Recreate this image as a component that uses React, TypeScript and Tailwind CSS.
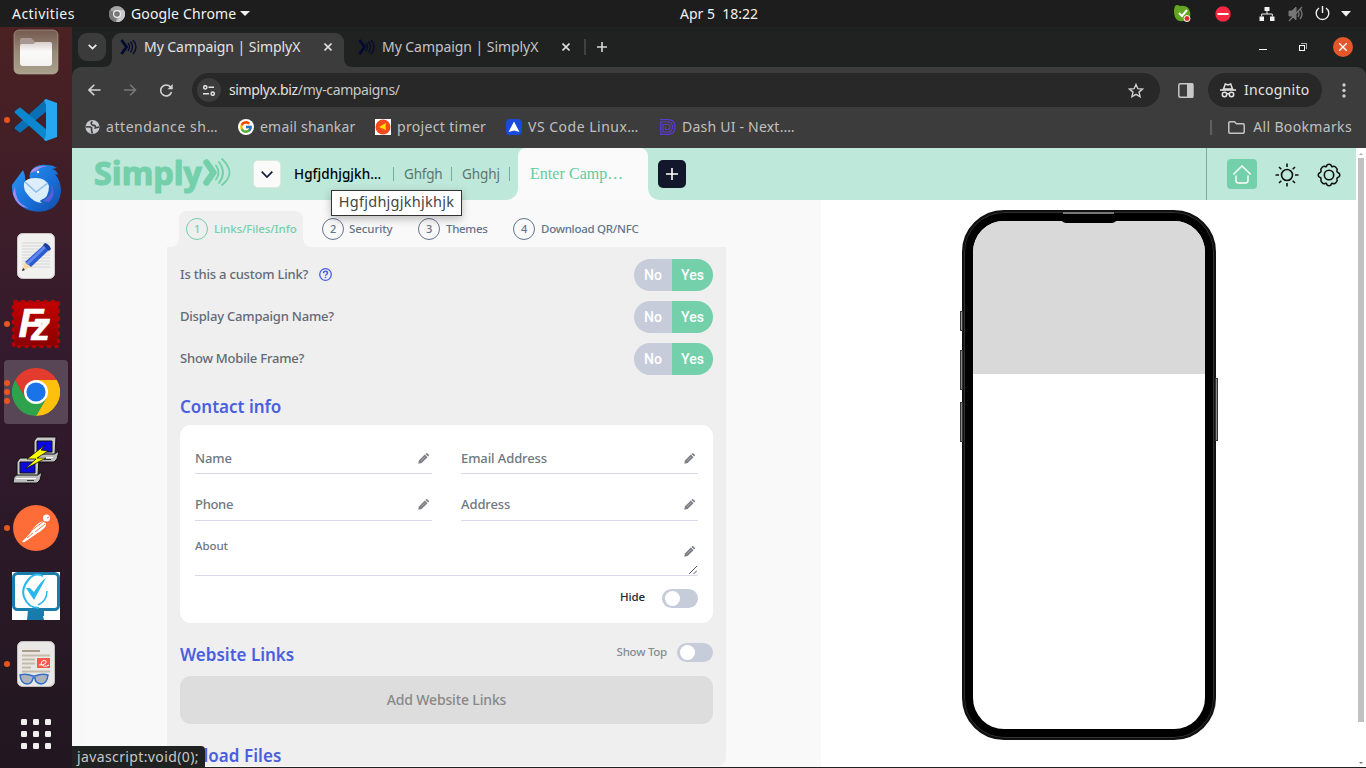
import React from "react";
import { FcGoogle } from "react-icons/fc";

const ui = "font-['Noto_Sans',sans-serif]";

/* ---------- Top bar ---------- */

function TopBar() {
  return (
    <div className="relative flex h-[27px] shrink-0 items-center bg-[#1d1d1d] text-[14px] text-[#f2f2f2]">
      <span className="w-[109px] pl-[12px] text-[14px] tracking-[0.45px]">Activities</span>
      <svg width="16" height="16" viewBox="0 0 16 16">
        <circle cx="8" cy="8" r="8" fill="#a5a5a5" />
        <path d="M8 8 1 4a8 8 0 0 0 6 12z" fill="#787878" />
        <path d="M8 4h7a8 8 0 0 1-8 12l4-6z" fill="#c9c9c9" />
        <circle cx="8" cy="8" r="4" fill="#eee" />
        <circle cx="8" cy="8" r="2.8" fill="#777" />
      </svg>
      <span className="ml-[6px] w-[104px] whitespace-nowrap text-[14px] tracking-[0.15px]">Google Chrome</span>
      <svg className="ml-[5px]" width="10" height="5" viewBox="0 0 10 5"><path d="M0 0h10L5 5z" fill="#f2f2f2" /></svg>
      <span className="ml-[430px] w-[80px] whitespace-pre text-[14px] tracking-[0px]">Apr 5  18:22</span>
      <svg className="ml-[414px]" width="17" height="17" viewBox="0 0 17 17">
        <path d="M1 1q2-2 5 0 6-1 9 3 2 4 1 8-2 5-7 4-6 1-8-4Q-1 6 1 1z" fill="#61a521" />
        <path d="m5 8 3 3 5-6" stroke="#fff" strokeWidth="2" fill="none" />
        <circle cx="13" cy="13.5" r="3" fill="#e03030" stroke="#fff" />
      </svg>
      <svg className="ml-[24px]" width="16" height="16" viewBox="0 0 16 16">
        <circle cx="8" cy="8" r="7.7" fill="#f42941" /><path d="M2.500 7h11v2h-11z" fill="#fff" />
      </svg>
      <svg className="ml-[28px]" width="16" height="14" viewBox="0 0 16 14" fill="#f2f2f2">
        <path d="M5.500 0h5v4h-5zM.5 9.500h4.500V14H.5zM11 9.500h4.500V14H11z" />
        <path d="M8 4v3M2.700 9.500V7h10.600v2.500" stroke="#f2f2f2" fill="none" />
      </svg>
      <svg className="ml-[13px]" width="16" height="16" viewBox="0 0 16 16" fill="none" stroke="#777">
        <path d="M1 5h3l4-4v13l-4-4H1z" fill="#777" /><path d="M10 5q2 3 0 6M12 3q4 5 0 10M1 15 14 1" strokeWidth="1.300" />
      </svg>
      <svg className="ml-[11px]" width="15" height="15" viewBox="0 0 15 15" fill="none" stroke="#f2f2f2" strokeWidth="1.400">
        <path d="M4 2a6.300 6.300 0 1 0 7 0M7.500 0v7" />
      </svg>
      <svg className="ml-[11px]" width="10" height="6" viewBox="0 0 10 6"><path d="M0 0h10L5 5.500z" fill="#f2f2f2" /></svg>
    </div>
  );
}

/* ---------- Dock ---------- */

function FilesIcon() {
  return (
    <svg width="46" height="46" viewBox="0 0 46 46">
      <defs>
        <linearGradient id="fg" x1="0" y1="0" x2="0" y2="1"><stop offset="0" stopColor="#75594f" /><stop offset=".5" stopColor="#978a77" /><stop offset="1" stopColor="#a9a08b" /></linearGradient>
        <linearGradient id="ff" x1="0" y1="0" x2="0" y2="1"><stop offset="0" stopColor="#d9cfcc" /><stop offset=".4" stopColor="#fbfafa" /><stop offset="1" stopColor="#f4f2f1" /></linearGradient>
      </defs>
      <rect x="1" y="1" width="44" height="44" rx="5" fill="url(#fg)" stroke="#b7ae9c" strokeOpacity=".6" />
      <path d="M7 11q0-2 2-2h9l4 4h15q2 0 2 2v8H7z" fill="#a99793" />
      <path d="M7 17q0-2 2-2h11l3-2h14q2 0 2 2v19q0 3-3 3H10q-3 0-3-3z" fill="url(#ff)" />
    </svg>
  );
}

function VsCodeIcon() {
  return (
    <svg width="44" height="44" viewBox="0 0 44 44">
      <path d="M32 1 1 29q-1 1 0 2l4 3q1 1 2 0L33 13z" fill="#0870b4" />
      <path d="M32 43 1 15q-1-1 0-2l4-3q1-1 2 0l26 22z" fill="#0a87cf" />
      <path d="m32 1 11 4v34l-11 4-2-1 2-5V7l-2-5z" fill="#27a7f0" />
    </svg>
  );
}

function ThunderbirdIcon() {
  return (
    <svg width="50" height="48" viewBox="0 0 50 48">
      <defs><linearGradient id="tb" x1="0" y1="0" x2="1" y2="1"><stop offset="0" stopColor="#2a9af5" /><stop offset=".6" stopColor="#176cd6" /><stop offset="1" stopColor="#124ba5" /></linearGradient></defs>
      <path d="M1 21Q6 14 12 6q3 6 2 11l5-1q-2-8 5-13 5-3 12-2 6 0 10 3l-5 1q5 1 6 6l-3-1q6 7 6 17-1 13-10 18-10 5-23 1Q0 39 1 21z" fill="url(#tb)" />
      <path d="M19 9q3-8 17-7-7 1-11 5zM4 22q0 16 13 22Q6 43 2 30z" fill="#a98bf0" />
      <path d="M6 24q-2 14 12 19Q3 40 6 24z" fill="#1d7ee8" />
      <path d="M40 19q3 11-8 18l6 1q8-7 2-19z" fill="#5a5fd5" />
      <circle cx="27" cy="8" r="1.200" fill="#fff" />
      <path d="M13 19q2-5 12-5t13 8q0 12-8 14-2 1 1 3-9-1-14-8-5-5-4-12z" fill="#dcedfb" />
      <path d="m14 18 11 10 12-9" fill="none" stroke="#8bbbe8" strokeWidth="1.500" />
    </svg>
  );
}

function EditorIcon() {
  return (
    <svg width="38" height="46" viewBox="0 0 38 46">
      <rect x=".5" y=".5" width="37" height="45" rx="5" fill="#f1f1f0" stroke="#c9c7c5" />
      <path d="M5 10h28M5 13h28M5 16h28M5 19h28M5 22h28M5 25h28M5 28h28M5 31h28M5 34h28" stroke="#cfcfcf" strokeWidth=".8" />
      <path d="m5 38 3-9 6 5z" fill="#f7d9a8" /><path d="m5 38 1-3 2 2z" fill="#222" />
      <path d="m8 29 20-18 5 5-19 18z" fill="#2c5bd0" /><path d="m9 30 19-18 2 2-19 18z" fill="#6089ef" />
      <path d="m26 12 2-2q4 1 6 6l-2 2z" fill="#1d3f9e" />
    </svg>
  );
}

function FileZillaIcon() {
  return (
    <svg width="48" height="48" viewBox="0 0 48 48">
      <defs><linearGradient id="fz" x1="0" y1="0" x2="0" y2="1"><stop offset="0" stopColor="#c50000" /><stop offset="1" stopColor="#8a0000" /></linearGradient></defs>
      <rect x="1.500" y="1.500" width="45" height="45" fill="url(#fz)" />
      <rect x="1.500" y="1.500" width="45" height="45" fill="none" stroke="#b00404" strokeWidth="3" strokeDasharray="4 3.500" />
      <g fontFamily="Liberation Sans, sans-serif" fontWeight="700" fontStyle="italic" fill="#fff" stroke="#fff" strokeWidth=".6">
        <text x="6.500" y="37" fontSize="41" textLength="25" lengthAdjust="spacingAndGlyphs">F</text>
        <text x="19" y="40" fontSize="39" textLength="19" lengthAdjust="spacingAndGlyphs">z</text>
      </g>
    </svg>
  );
}

function ChromeIcon() {
  return (
    <svg width="48" height="48" viewBox="0 0 48 48">
      <path d="M24 12h20.800A24 24 0 0 1 24 48l10.400-18z" fill="#fdc10d" />
      <path d="M3.200 12A24 24 0 0 0 24 48l10.400-18-20.800 0z" fill="#2fa24c" />
      <path d="M24 12h20.800A24 24 0 0 0 3.200 12l10.400 18z" fill="#e33b2e" />
      <circle cx="24" cy="24" r="12" fill="#fff" /><circle cx="24" cy="24" r="9.600" fill="#1a73e8" />
    </svg>
  );
}

function PuttyIcon() {
  const pc = (
    <g stroke="#111" strokeWidth="1">
      <path d="m1 19 4-3h21l3-2-2 8-3 3H0z" fill="#bdbdbd" />
      <path d="M4 4 7 0h19l-1 17H4z" fill="#c9c9c9" />
      <path d="M7 4h15v11H7z" fill="#0a0ae0" />
      <path d="M3 20.500h20" stroke="#fff" /><path d="M14 22.500h7" stroke="#333" />
    </g>
  );
  return (
    <svg width="48" height="48" viewBox="0 0 48 48">
      <g transform="translate(18 1)">{pc}</g><g transform="translate(1 22)">{pc}</g>
      <path d="m33 9-18 14h9l-11 10 21-11h-9l11-7-7-1z" fill="#ff0" stroke="#111" strokeWidth=".8" />
    </svg>
  );
}

function PostmanIcon() {
  return (
    <svg width="46" height="46" viewBox="0 0 46 46">
      <circle cx="23" cy="23" r="23" fill="#fe6c37" />
      <path d="M9 36.500q8-7 11-13 7-8 10-7l3 2q1 4-9 10L11 37.500z" fill="#fff" />
      <path d="m19 25 12-9m-9 11 10-8M14 33l6-5" stroke="#fe6c37" strokeWidth=".9" />
      <circle cx="33.500" cy="13" r="3.500" fill="#fff" /><path d="m34 13 2-1" stroke="#fe6c37" />
    </svg>
  );
}

function TickIcon() {
  return (
    <svg width="48" height="48" viewBox="0 0 48 48">
      <path d="M0 0h48v48H0z" fill="#fff" />
      <rect x="1.500" y="1.500" width="45" height="36" rx="4" fill="none" stroke="#187cad" strokeWidth="3" />
      <path d="M16 38h16v6h-1l1 4H15z" fill="#187cad" />
      <path d="M31 4Q23 0 17 7q-8 9-5 18 4 11 15 11" fill="none" stroke="#2bb6ee" strokeWidth="2" />
      <path d="m14 16 8 12L34 6q-5 3-12 14l-4-4z" fill="#2bb6ee" />
      <path d="M35 19q0 10-9 14" fill="none" stroke="#2bb6ee" strokeWidth="1.500" />
    </svg>
  );
}

function DocIcon() {
  return (
    <svg width="38" height="46" viewBox="0 0 38 46">
      <rect x=".5" y=".5" width="37" height="45" rx="5" fill="#e9e8e7" stroke="#bfbcba" />
      <path d="M5 10h18" stroke="#aa9d88" strokeWidth="2" />
      <path d="M5 14.500h28M5 18.500h13M5 22.500h13M5 26.500h9M5 30.500h28" stroke="#c5bba9" strokeWidth="1.800" />
      <path d="M20 17h13v10H20z" fill="#f45a4c" /><path d="M22 24q8 0 7-4-4-2-5 3 3 4 8 1" fill="none" stroke="#fff" />
      <path d="M3 34q6-2 13 1h2q7-3 13-1-1 9-7 9-6-1-6-6h-2q-1 6-6 6-6 0-7-9z" fill="#aeb3bb" stroke="#2f6fc4" strokeWidth="1.500" />
    </svg>
  );
}

function GridIcon() {
  return (
    <svg className="mt-[4px]" width="30" height="30" viewBox="0 0 30 30" fill="#f0eeee">
      {[0, 12, 24].map((y) => [0, 12, 24].map((x) => <rect key={`${x}-${y}`} x={x} y={y} width="6" height="6" rx="1.200" />))}
    </svg>
  );
}

function Dock() {
  const items: [React.ReactNode, number][] = [
    [<FilesIcon />, 0], [<VsCodeIcon />, 1], [<ThunderbirdIcon />, 0], [<EditorIcon />, 0], [<FileZillaIcon />, 1],
    [<ChromeIcon />, 3], [<PuttyIcon />, 0], [<PostmanIcon />, 1], [<TickIcon />, 0], [<DocIcon />, 1], [<GridIcon />, 0],
  ];
  return (
    <div className="w-[72px] shrink-0 overflow-hidden bg-linear-to-b from-[#4b2122] via-[#331a2d] via-45% to-[#211720]">
      <div className="-mt-[9px] flex flex-col">
        {items.map(([icon, dots], i) => (
          <div key={i} className="flex h-[68px] shrink-0 items-center justify-center px-[4px]">
            <div className={dots === 3 ? "relative flex size-[64px] items-center justify-center rounded-[4px] bg-[#584657]" : "relative flex size-[64px] items-center justify-center"}>
              {icon}
              {dots > 0 && (
                <div className="absolute left-0 top-0 flex h-full flex-col items-center justify-center gap-[3px]">
                  {Array.from({ length: dots }).map((_, k) => <div key={k} className="size-[6px] rounded-full bg-[#e9541f]" />)}
                </div>
              )}
            </div>
          </div>
        ))}
      </div>
    </div>
  );
}

/* ---------- Browser chrome ---------- */

function Favicon() {
  return (
    <svg width="17" height="16" viewBox="0 0 17 16" fill="none" stroke="#050b2e">
      <path d="m1.500 1 5 7-5 7" strokeWidth="3" />
      <path d="M8 4q3 4 0 8M10.500 2.500q4 5.500 0 11M13 1q6 7 0 14" strokeWidth="1.300" />
    </svg>
  );
}

function Cross() {
  return <svg width="8" height="8" viewBox="0 0 8 8" stroke="#dcdcdc" strokeWidth="1.600"><path d="m.5.5 7 7m0-7-7 7" /></svg>;
}

function TabStrip() {
  return (
    <div className="flex h-[40px] shrink-0 bg-[#202222] pl-[6px] text-[14px]">
      <div className="mt-[6px] flex size-[28px] items-center justify-center rounded-[9px] bg-[#3b3b3b]">
        <svg width="9" height="6" viewBox="0 0 9 6" fill="none" stroke="#ececec" strokeWidth="1.700"><path d="m.7.8 3.800 3.800L8.300.8" /></svg>
      </div>
      <div className="relative ml-[6px] mt-[6px] flex h-[34px] w-[232px] items-start rounded-t-[9px] bg-[#3c3c3c] pl-[8px] text-[#e3e3e3]">
        <svg className="absolute -left-[9px] bottom-0" width="9" height="9" viewBox="0 0 9 9"><path d="M9 0v9H0q9 0 9-9z" fill="#3c3c3c" /></svg>
        <svg className="absolute -right-[9px] bottom-0" width="9" height="9" viewBox="0 0 9 9"><path d="M0 0v9h9q-9 0-9-9z" fill="#3c3c3c" /></svg>
        <div className="flex h-[28px] items-center"><Favicon />
          <span className="mb-[2px] ml-[7px] w-[180px] whitespace-nowrap text-[14px] tracking-[-0.06px]">My Campaign | SimplyX</span><Cross /></div>
      </div>
      <div className="mt-[6px] flex h-[28px] items-center pl-[14px] text-[#c4c4c4]">
        <Favicon />
        <span className="mb-[2px] ml-[7px] w-[180px] whitespace-nowrap text-[14px] tracking-[-0.06px]">My Campaign | SimplyX</span>
        <Cross />
        <div className="ml-[14px] h-[16px] w-[2px] bg-[#3f4040]" />
        <svg className="ml-[11px]" width="10" height="10" viewBox="0 0 10 10" stroke="#d8d8d8" strokeWidth="1.600"><path d="M5 0v10M0 5h10" /></svg>
      </div>
      <div className="ml-auto flex items-center pr-[13px]">
        <div className="mt-[5px] h-px w-[8px] bg-white" />
        <svg className="ml-[32px]" width="8" height="8" viewBox="0 0 8 8" fill="none" shapeRendering="crispEdges"><path d="M.5 2.500h5v5h-5z" stroke="#fff" /><path d="M2 .5h5.500V6" stroke="#aaa" /></svg>
        <div className="ml-[26px] flex size-[20px] items-center justify-center rounded-full bg-[#e5562a]">
          <svg width="8" height="8" viewBox="0 0 8 8" stroke="#fff" strokeWidth="1.400"><path d="m0 0 8 8m0-8-8 8" /></svg>
        </div>
      </div>
    </div>
  );
}

function Toolbar() {
  return (
    <div className="flex h-[46px] shrink-0 items-center rounded-t-[9px] bg-[#3c3c3c]">
      <svg className="ml-[16px]" width="13" height="12" viewBox="0 0 13 12" fill="none" stroke="#d2d2d2" strokeWidth="1.600"><path d="M12.500 6H1.200M6.300.7 1 6l5.300 5.300" /></svg>
      <svg className="ml-[23px]" width="13" height="12" viewBox="0 0 13 12" fill="none" stroke="#787878" strokeWidth="1.600"><path d="M0 6h11.300M6.200.7 11.500 6l-5.300 5.300" /></svg>
      <svg className="ml-[23px]" width="13" height="13" viewBox="0 0 13 13"><path d="M11.500 8A5.500 5.500 0 1 1 10.500 3L12 4.600" fill="none" stroke="#d2d2d2" strokeWidth="1.600" /><path d="M12.700 0v5.300H7.500z" fill="#d2d2d2" /></svg>
      <div className="ml-[19px] flex h-[34px] w-[968px] items-center rounded-full bg-[#282828] px-[5px] text-[14px]">
        <div className="flex size-[24px] items-center justify-center rounded-full bg-[#3c3c3c]">
          <svg width="12" height="11" viewBox="0 0 12 11" fill="none" stroke="#e3e3e3" strokeWidth="1.500"><circle cx="2.300" cy="2.300" r="1.600" /><path d="M5.500 2.300H11M0 8.700h6" /><circle cx="9.700" cy="8.700" r="1.600" /></svg>
        </div>
        <span className="mb-[2px] ml-[8px] tracking-[-0.36px] text-[#e3e3e3]">simplyx.biz<span className="text-[#c7c7c7]">/my-campaigns/</span></span>
        <svg className="ml-auto mr-[11px]" width="16" height="15" viewBox="0 0 16 15" fill="none" stroke="#d0d0d0" strokeWidth="1.400"><path d="m8 1.500 1.900 4.200 4.600.4-3.500 3 1.100 4.600L8 11.300l-4.100 2.400L5 9.100l-3.500-3 4.600-.4z" /></svg>
      </div>
      <svg className="ml-[18px]" width="16" height="15" viewBox="0 0 16 15"><rect x=".8" y=".8" width="13.900" height="13.400" rx="1.500" fill="none" stroke="#c7c7c7" strokeWidth="1.500" /><path d="M9 0h5q1.500 0 1.500 1.500v12Q15.500 15 14 15H9z" fill="#c7c7c7" /></svg>
      <div className="ml-[14px] flex h-[34px] w-[114px] items-center rounded-full bg-[#282828] pl-[12px] text-[14px] text-[#e3e3e3]">
        <svg width="16" height="15" viewBox="0 0 16 15"><path d="M0 7h16" fill="none" stroke="#e3e3e3" strokeWidth="1.600" /><path d="M3.500 6 5.300 1 8 2l2.700-1 1.800 5z" fill="none" stroke="#e3e3e3" strokeWidth="1.500" /><g fill="none" stroke="#e3e3e3" strokeWidth="1.500"><circle cx="4.500" cy="11.500" r="2.200" /><circle cx="11.500" cy="11.500" r="2.200" /><path d="M6.700 11q1.300-.8 2.600 0" /></g></svg>
        <span className="mb-[1px] ml-[8px] text-[14px] tracking-[0.28px]">Incognito</span>
      </div>
      <svg className="ml-[20px]" width="4" height="15" viewBox="0 0 4 15" fill="#cdcdcd"><circle cx="2" cy="2" r="1.700" /><circle cx="2" cy="7.500" r="1.700" /><circle cx="2" cy="13" r="1.700" /></svg>
    </div>
  );
}

function Bookmarks() {
  return (
    <div className="flex h-[35px] shrink-0 bg-[#3c3c3c] pl-[13px] text-[14px] text-[#c0c0c0]">
      <div className="flex h-[28px] items-center whitespace-nowrap">
        <svg width="15" height="16" viewBox="0 0 16 16"><circle cx="8" cy="8" r="7.500" fill="#c4c7cc" /><path d="M1 8q4-1 6 1v3l1 3M8 2q-3 2 0 4 4 0 3 3l4-1" fill="none" stroke="#3c3c3c" strokeWidth="1.700" /></svg>
        <span className="mb-[2px] ml-[6px] w-[132px] tracking-[0.56px]">attendance sh…</span>
        <span className="flex size-[16px] items-center justify-center rounded-full bg-white"><FcGoogle size={14} /></span>
        <span className="mb-[2px] ml-[6px] w-[115px] tracking-[0.22px]">email shankar</span>
        <svg width="16" height="16" viewBox="0 0 16 16"><path d="M0 0h16v16H0z" fill="#fff" /><circle cx="8" cy="8" r="7.500" fill="#f3491d" /><path d="m4 8 7-4-.5 3.500L11 11z" fill="#ffe500" /></svg>
        <span className="mb-[2px] ml-[6px] w-[109px] tracking-[0.33px]">project timer</span>
        <svg width="16" height="16" viewBox="0 0 16 16"><rect width="16" height="16" rx="4" fill="#194bdb" /><path d="M8 2.500 13.500 13 8 11.500 2.500 13z" fill="#fff" /></svg>
        <span className="mb-[2px] ml-[6px] w-[132px] tracking-[0.5px]">VS Code Linux…</span>
        <svg width="16" height="16" viewBox="0 0 16 16" fill="none" stroke="#5b3ccc" strokeWidth="1.200"><path d="M0 .7h8q7 0 7 7.300t-7 7.300H.7V3M0 3h8q4.500 0 4.500 5T8 13H3V5.500h5q2 0 2 2.500t-2 2.500H5.500V7.500" /></svg>
        <span className="mb-[2px] ml-[6px] tracking-[0.22px]">Dash UI - Next.…</span>
      </div>
      <div className="ml-auto flex h-[28px] items-center whitespace-nowrap pr-[14px]">
        <div className="h-[15px] w-[2px] bg-[#606060]" />
        <svg className="ml-[16px] mr-[8px]" width="17" height="13" viewBox="0 0 17 13" fill="none" stroke="#c4c4c4" strokeWidth="1.500"><path d="M.8 11V2Q.8.8 2 .8h4.500l2 2H15q1.200 0 1.200 1.200v7q0 1.200-1.200 1.200H2Q.8 12.200.8 11z" /></svg>
        <span className="mb-[2px] tracking-[0.35px]">All Bookmarks</span>
      </div>
    </div>
  );
}

/* ---------- Page ---------- */

function Logo() {
  return (
    <svg className="overflow-visible" width="140" height="50" viewBox="93 149 140 50">
      <text x="94" y="184.500" textLength="108" lengthAdjust="spacingAndGlyphs" fontSize="32.500" fontWeight="700" fontFamily="Open Sans, sans-serif" fill="#74d0ab" stroke="#74d0ab" strokeWidth="1.200" strokeLinejoin="round">Simply</text>
      <g fill="none" stroke="#74d0ab" strokeLinecap="round">
        <path d="m206.500 162.500 7 10-7 10" strokeWidth="6.500" strokeLinejoin="round" />
        <path d="M216 165.500q5 7 0 14M219 162q8 10.500 0 21M222 159q15 14 0 26" strokeWidth="1.800" />
      </g>
    </svg>
  );
}

function Header() {
  return (
    <div className="flex h-[52px] shrink-0 bg-[#fafafa]">
      <div className="flex w-[446px] items-center rounded-br-[12px] bg-[#bee8da] pl-[21px] text-[13.5px] text-[#5d746f]">
        <Logo />
        <div className="ml-[20px] flex size-[28px] items-center justify-center rounded-[5px] border border-[#dfe8df] bg-[#fafafa]">
          <svg width="12" height="7" viewBox="0 0 12 7" fill="none" stroke="#101936" strokeWidth="1.700"><path d="m.7.700 5.300 5.300L11.300.7" /></svg>
        </div>
        <span className="ml-[13px] w-[99px] whitespace-nowrap text-[13.5px] font-medium tracking-[0.07px] text-black">Hgfjdhjgjkh…</span>
        <div className="h-[14px] w-px bg-[#72af9c]" />
        <span className="ml-[10px] w-[47px] tracking-[-0.2px]">Ghfgh</span>
        <div className="h-[14px] w-px bg-[#72af9c]" />
        <span className="ml-[10px] w-[47px] tracking-[-0.1px]">Ghghj</span>
        <div className="h-[14px] w-px bg-[#72af9c]" />
      </div>
      <div className="w-[130px] bg-[linear-gradient(#bee8da_50%,#fafafa_50%)]">
        <div className="flex h-full items-center rounded-t-[8px] bg-[#fafafa] pl-[12px] font-['Liberation_Serif',serif] text-[16px] tracking-[0.05px] text-[#61cc9e]">Enter Camp…</div>
      </div>
      <div className="flex flex-1 items-center rounded-bl-[12px] bg-[#bee8da] pl-[10px]">
        <div className="flex size-[28px] items-center justify-center rounded-[5px] bg-[#12172b]">
          <svg width="12" height="12" viewBox="0 0 12 12" stroke="#fff" strokeWidth="1.600"><path d="M6 0v12M0 6h12" /></svg>
        </div>
        <div className="ml-auto flex h-full items-center border-l border-[#72af9c] pl-[20px] pr-[15px]">
          <div className="flex size-[30px] items-center justify-center rounded-[4px] bg-[#74d0ab]">
            <svg width="18" height="19" viewBox="0 0 18 19" fill="none" stroke="#fff" strokeWidth="1.400" strokeLinecap="round"><path d="m.8 9 8.200-8 8.200 8M3 11v4.500Q3 18 5.500 18h7q2.500 0 2.500-2.500V11" /></svg>
          </div>
          <svg className="ml-[18px] mt-[2px]" width="24" height="24" viewBox="0 0 24 24" fill="none" stroke="#111" strokeWidth="1.600"><circle cx="12" cy="12" r="5.500" /><path d="M12 .5V4M12 20v3.500M.5 12H4M20 12h3.500M4 4l2.300 2.300M17.700 17.700 20 20M4 20l2.300-2.300M17.700 6.300 20 4" /></svg>
          <svg className="ml-[18px] mt-[2px]" width="24" height="24" viewBox="0 0 24 24" fill="none" stroke="#111" strokeWidth="1.600" strokeLinejoin="round">
            <circle cx="12" cy="12" r="4.700" />
            <path d="M9.600 3Q10 1.200 12 1.200T14.400 3q.3 1 1.500.5Q17.500 2.700 19 4.500q1.800 1.500 1 3.300-.4 1 .8 1.600 2 .6 2 2.600t-2 2.600q-1.200.5-.8 1.600.8 1.800-1 3.300-1.500 1.800-3.100 1-1.200-.5-1.500.5-.4 1.800-2.400 1.800T9.600 21q-.3-1-1.500-.5-1.600.8-3.100-1-1.800-1.500-1-3.300.4-1.100-.8-1.600-2-.6-2-2.600t2-2.600Q4.400 8.800 4 7.800q-.8-1.800 1-3.300 1.500-1.800 3.100-1 1.200.5 1.500-.5z" />
          </svg>
        </div>
      </div>
    </div>
  );
}

function Steps() {
  const circle = "flex size-[22px] shrink-0 items-center justify-center rounded-full border border-current text-[11px]";
  return (
    <div className="flex h-[36px] items-center pl-[12px] text-[11.5px] font-medium tracking-[-0.1px] text-[#64748b]">
      <div className="relative flex h-full w-[124px] items-center whitespace-nowrap rounded-t-[8px] bg-[#efefef] pl-[7px] text-[#74d0ab]">
        <svg className="absolute -left-[8px] bottom-0" width="8" height="8" viewBox="0 0 8 8"><path d="M8 0v8H0q7-1 8-8z" fill="#efefef" /></svg>
        <svg className="absolute -right-[8px] bottom-0" width="8" height="8" viewBox="0 0 8 8"><path d="M0 0v8h8q-7-1-8-8z" fill="#efefef" /></svg>
        <span className={circle}>1</span><span className="ml-[6px]">Links/Files/Info</span>
      </div>
      <span className={`${circle} ml-[19px]`}>2</span><span className="ml-[5px] w-[69px]">Security</span>
      <span className={circle}>3</span><span className="ml-[6px] w-[67px] tracking-[-0.3px]">Themes</span>
      <span className={circle}>4</span><span className="ml-[6px] tracking-[-0.27px]">Download QR/NFC</span>
    </div>
  );
}

function YesNo() {
  return (
    <div className="flex h-[32px] w-[79px] overflow-hidden rounded-full font-['Roboto',sans-serif] text-[14px] font-medium tracking-normal text-white">
      <div className="flex w-[38px] items-center justify-center bg-[#c7ccda]">No</div>
      <div className="flex w-[41px] items-center justify-center bg-[#74d0ab]">Yes</div>
    </div>
  );
}

function Switch() {
  return <div className="flex h-[19px] w-[36px] items-center rounded-full bg-[#c7ccda] pl-[3px]"><div className="size-[15px] rounded-full bg-white" /></div>;
}

function Pencil({ className }: { className: string }) {
  return (
    <svg className={className} width="11" height="11" viewBox="0 0 11 11">
      <path d="M.3 10.700.9 7.400 6.800 1.500l2.700 2.700-5.900 5.900z" fill="#7d7e87" />
      <path d="m7.400.9.500-.5q.7-.7 1.500 0l1.200 1.200q.7.800 0 1.500l-.5.500z" fill="#7d7e87" />
      <path d="m3 7.800 4-4" stroke="#c5c5cb" strokeWidth=".6" />
    </svg>
  );
}

function Field({ label, className }: { label: string; className: string }) {
  return (
    <div className={`flex items-start justify-between border-b border-[#d9d8ec] pr-[3px] ${className}`}>
      <span className="text-[13px] leading-[18px]">{label}</span>
      <Pencil className="mt-[4px]" />
    </div>
  );
}

function FormPanel() {
  return (
    <div className="h-[519px] w-[559px] overflow-hidden rounded-b-[8px] bg-[#efefef] px-[13px] pt-[12px] text-[13px] font-medium text-[#626a76]">
      <div className="flex flex-col gap-[10px] tracking-[-0.2px]">
        <div className="flex h-[32px] items-center justify-between">
          <span className="flex items-center"><span className="w-[139px] whitespace-nowrap">Is this a custom Link?</span>
            <svg className="mb-[2px]" width="13" height="13" viewBox="0 0 13 13" fill="none" stroke="#4a5fe0" strokeWidth="1.300"><circle cx="6.500" cy="6.500" r="5.800" /><path d="M4.500 5.200q0-1.900 2-1.900t2 1.700q0 1-1.200 1.600-.8.300-.8 1.100M6.500 8.800v1.200" strokeWidth="1.500" /></svg></span>
          <YesNo />
        </div>
        <div className="flex h-[32px] items-center justify-between"><span>Display Campaign Name?</span><YesNo /></div>
        <div className="flex h-[32px] items-center justify-between"><span>Show Mobile Frame?</span><YesNo /></div>
      </div>
      <h2 className="mt-[20px] h-[30px] text-[17px] font-semibold leading-[24px] text-[#4a5fe0]">Contact info</h2>
      <div className="h-[198px] rounded-[11px] bg-white px-[15px] pt-[24px] tracking-[-0.1px] text-[#6f7780]">
        <div className="grid grid-cols-[237px_237px] gap-x-[29px]">
          <Field label="Name" className="h-[25px]" /><Field label="Email Address" className="h-[25px]" />
          <Field label="Phone" className="mt-[21px] h-[26px] tracking-[-0.3px]" /><Field label="Address" className="mt-[21px] h-[26px]" />
        </div>
        <div className="relative flex h-[55px] justify-between border-b border-[#d9d8ec] pr-[3px] pt-[16px]">
          <span className="text-[11.5px] leading-[17px]">About</span>
          <Pencil className="mt-[9px]" />
          <svg className="absolute bottom-[1px] right-[1px]" width="8" height="8" viewBox="0 0 8 8" stroke="#555"><path d="M0 8 8 0M4.500 8 8 4.500" /></svg>
        </div>
        <div className="flex items-start justify-end pt-[13px] text-[11.5px]">
          <span className="mr-[17px] -mt-px leading-[17px] text-[#23272e]">Hide</span><Switch />
        </div>
      </div>
      <div className="mt-[18px] flex h-[35px] items-start justify-between">
        <h2 className="mt-px text-[17px] font-semibold leading-[26px] text-[#4a5fe0]">Website Links</h2>
        <div className="mt-[2px] flex items-center text-[11.5px] tracking-[-0.25px] text-[#858b94]"><span className="mb-[2px] mr-[10px]">Show Top</span><Switch /></div>
      </div>
      <div className="flex h-[48px] items-center justify-center rounded-[11px] bg-[#dddddd] pb-[2px] text-[14px] tracking-[-0.15px] text-[#888888]">Add Website Links</div>
      <h2 className="mt-[20px] text-[17px] font-semibold leading-[24px] tracking-[0.05px] text-[#4a5fe0]">Upload Files</h2>
    </div>
  );
}

function Phone() {
  return (
    <div className="relative mt-[10px] h-[530px] w-[254px] rounded-[42px] border-[2px] border-[#111] bg-black p-[9px] shadow-[inset_0_0_0_1px_#303232]">
      <div className="absolute -left-[4px] top-[99px] h-[20px] w-[3px] border border-[#333] bg-[#999]" />
      <div className="absolute -left-[4px] top-[138px] h-[40px] w-[3px] border border-[#333] bg-[#888]" />
      <div className="absolute -left-[4px] top-[190px] h-[40px] w-[3px] border border-[#333] bg-[#888]" />
      <div className="absolute -right-[4px] top-[166px] h-[63px] w-[3px] border border-[#333] bg-[#888]" />
      <div className="h-full overflow-hidden rounded-[31px] bg-white"><div className="h-[153px] bg-[#d9d9d9]" /></div>
      <div className="absolute left-[97px] top-[1px] h-[10px] w-[56px] rounded-b-[5px] bg-black" />
      <div className="absolute left-[99px] top-0 h-[2px] w-[51px] bg-[#777]" />
    </div>
  );
}

export default function App() {
  return (
    <div className={`flex h-[768px] w-[1366px] flex-col overflow-hidden bg-[#202222] ${ui}`}>
      <TopBar />
      <div className="flex min-h-0 flex-1">
        <Dock />
        <div className="relative flex w-[1294px] flex-col bg-[#202222]">
          <TabStrip /><Toolbar /><Bookmarks />
          <div className="flex h-[619px]">
            <div className="flex w-[1284px] flex-col bg-white">
              <Header />
              <div className="flex min-h-0 flex-1">
                <div className="w-[749px] border-l-[14px] border-[#f8f8f9] bg-[#f9f9f9] pl-[81px] pt-[11px]"><Steps /><FormPanel /></div>
                <div className="flex flex-1 justify-center"><Phone /></div>
              </div>
            </div>
            <div className="flex w-[10px] flex-col items-center bg-white pt-[5px]">
              <svg width="4" height="2" viewBox="0 0 4 2"><path d="M2 0 4 2H0z" fill="#aaa" /></svg>
              <div className="mt-[3px] h-[564px] w-[6px] bg-[#c1c1c1]" />
              <svg className="mt-[40px]" width="4" height="2" viewBox="0 0 4 2"><path d="M0 0h4L2 2z" fill="#777" /></svg>
            </div>
          </div>
          <div className="absolute left-[259px] top-[163px] flex h-[26px] w-[131px] items-center justify-center border border-[#333] bg-white pb-[2px] text-[14.5px] tracking-[0.25px] text-[#444] shadow-[0_3px_8px_rgba(0,0,0,0.25)]">Hgfjdhjgjkhjkhjk</div>
          <div className="absolute bottom-[1px] left-0 flex h-[21px] w-[133px] items-center rounded-tr-[4px] bg-[#202222] pl-[5px] text-[14px] tracking-[0.38px] text-[#c7c7c7]">javascript:void(0);</div>
        </div>
      </div>
    </div>
  );
}
